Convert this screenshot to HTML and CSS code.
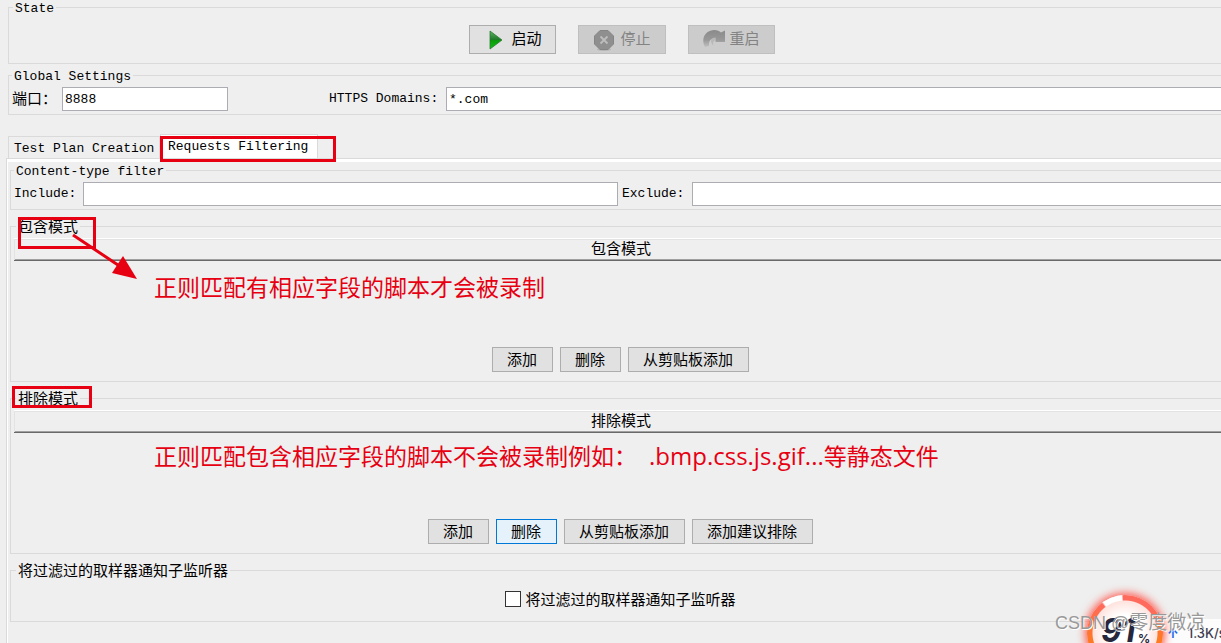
FILE: index.html
```
<!DOCTYPE html>
<html lang="zh-CN">
<head>
<meta charset="utf-8">
<title>HTTP(S) Test Script Recorder</title>
<link rel="stylesheet" href="styles.css">
</head>
<body>
<main class="recorder">
  <fieldset class="group state">
    <legend>State</legend>
    <div class="state-buttons">
      <button type="button" class="btn btn-icon">
        <svg class="icon" viewBox="0 0 22 22" aria-hidden="true">
          <defs><linearGradient id="play" x1="0" y1="0" x2="0" y2="1"><stop offset="0" stop-color="#5fb562"/><stop offset=".48" stop-color="#1f7a2a"/><stop offset=".52" stop-color="#0a9a0a"/><stop offset="1" stop-color="#10c010"/></linearGradient></defs>
          <path d="M6 2 18 11 6 20Z" fill="url(#play)" stroke="#2b7a33" stroke-width=".8"/>
        </svg>
        <span>启动</span>
      </button>
      <button type="button" class="btn btn-icon" disabled>
        <svg class="icon" viewBox="0 0 22 22" aria-hidden="true">
          <ellipse cx="11" cy="20.5" rx="7" ry="1.5" fill="#b4b4b4"/>
          <path d="M7 1.500h8l5.500 5.500v8L15 20.500H7L1.500 15V7Z" fill="#8f8f8f" stroke="#858585"/>
          <path d="m7.500 7.500 7 7m0-7-7 7" stroke="#bdbdbd" stroke-width="1.800"/>
        </svg>
        <span>停止</span>
      </button>
      <button type="button" class="btn btn-icon" disabled>
        <svg class="icon" viewBox="0 0 22 22" aria-hidden="true">
          <defs><linearGradient id="redo" x1="0" y1="0" x2="0" y2="1"><stop offset="0" stop-color="#8a8a8a"/><stop offset=".6" stop-color="#999"/><stop offset="1" stop-color="#c0c0c0"/></linearGradient></defs>
          <path d="M2 18C-1 12 0 7 4 3.500 8 0 15 0 18 3.500L22 1.500V13H12.500V10.500C9 8.500 5.500 11 6 17Z" fill="url(#redo)"/>
          <path d="M12.500 8.500C7.500 8.500 6.500 13 10.500 16.500 9.500 13 10.500 11.500 13 11.500" fill="#b8b8b8"/>
        </svg>
        <span>重启</span>
      </button>
    </div>
  </fieldset>

  <fieldset class="group">
    <legend>Global Settings</legend>
    <div class="global-row">
      <label class="cjk port-label" for="port">端口：</label>
      <input class="field port" id="port" type="text" value="8888">
      <label class="domains-label" for="domains">HTTPS Domains:</label>
      <input class="field domains" id="domains" type="text" value="*.com">
    </div>
  </fieldset>

  <div class="tabs" role="tablist">
    <button type="button" class="tab" role="tab" aria-selected="false">Test Plan Creation</button>
    <button type="button" class="tab tab-active" role="tab" aria-selected="true">Requests Filtering</button>
  </div>

  <section class="pane" role="tabpanel">
    <fieldset class="group">
      <legend>Content-type filter</legend>
      <div class="filter-row">
        <label for="include">Include:</label>
        <input class="field" id="include" type="text">
        <label for="exclude">Exclude:</label>
        <input class="field" id="exclude" type="text">
      </div>
    </fieldset>

    <fieldset class="group patterns">
      <legend class="cjk">包含模式</legend>
      <table class="pattern-table">
        <thead><tr><th scope="col">包含模式</th></tr></thead>
      </table>
      <div class="actions">
        <button type="button" class="btn">添加</button>
        <button type="button" class="btn">删除</button>
        <button type="button" class="btn">从剪贴板添加</button>
      </div>
    </fieldset>

    <fieldset class="group patterns">
      <legend class="cjk">排除模式</legend>
      <table class="pattern-table">
        <thead><tr><th scope="col">排除模式</th></tr></thead>
      </table>
      <div class="actions">
        <button type="button" class="btn">添加</button>
        <button type="button" class="btn btn-hot">删除</button>
        <button type="button" class="btn">从剪贴板添加</button>
        <button type="button" class="btn">添加建议排除</button>
      </div>
    </fieldset>

    <fieldset class="group notify">
      <legend class="cjk">将过滤过的取样器通知子监听器</legend>
      <label class="check-row cjk"><input class="check" type="checkbox">将过滤过的取样器通知子监听器</label>
    </fieldset>
  </section>
</main>

<div class="mark mark-tab"></div>
<div class="mark mark-include"></div>
<div class="mark mark-exclude"></div>
<svg class="arrow" viewBox="0 0 66 48" aria-hidden="true">
  <path d="M1 2 46 32" stroke="#e60012" stroke-width="3"/>
  <path d="M51 23 65 46 40 40Z" fill="#e60012"/>
</svg>
<p class="note note-include">正则匹配有相应字段的脚本才会被录制</p>
<p class="note note-exclude">正则匹配包含相应字段的脚本不会被录制例如：<span class="ext">.bmp.css.js.gif...</span>等静态文件</p>

<div class="monitor">
  <div class="speed"><span class="up">↑</span><span>1.3K/s</span></div>
  <div class="gauge"><span class="gauge-num">91</span><span class="gauge-unit">%</span></div>
  <div class="watermark">CSDN @<span class="author">零度微凉</span></div>
</div>
</body>
</html>
```
FILE: styles.css
```
* { box-sizing: border-box; }

body {
  position: relative;
  margin: 0;
  height: 100vh;
  overflow: hidden;
  background: #efefef;
  color: #000;
  font-family: "Liberation Mono", "Noto Sans CJK SC", monospace;
  font-size: 13px;
  line-height: 16px;
}

button, input { font: inherit; color: inherit; }

/* The panel runs a little past the right edge of the window. */
.recorder {
  display: flex;
  flex-direction: column;
  height: 100%;
  margin-right: -13px;
  padding: 1px 0 0 8px;
}

.cjk, .btn, .pattern-table {
  font-family: "Noto Sans CJK SC", sans-serif;
  font-size: 15px;
}

.group {
  min-width: 0;
  margin: 0;
  padding: 5px 3px 3px;
  border: 1px solid #dadada;
}

.group legend {
  height: 13px;
  padding: 0 2px;
  line-height: 16px;
}

.group legend.cjk { margin-left: 2px; line-height: 12px; }

.state { padding: 11px 0 9px 2px; }
.state legend { margin-left: 2px; }
.state-buttons { display: flex; justify-content: center; gap: 22px; }

.btn {
  height: 25px;
  padding: 0 15px 2px 14px;
  border: 1px solid #adadad;
  background: #e1e1e1;
  line-height: 20px;
  white-space: nowrap;
}

.btn-hot { border-color: #0078d7; background: #e5f1fb; }

.btn-icon {
  display: flex;
  align-items: center;
  gap: 5px;
  height: 29px;
  padding: 0 14px;
}

.btn-icon span { padding-bottom: 4px; }

.btn:disabled { border-color: #bfbfbf; background: #ccc; color: #838383; }
.icon { width: 22px; height: 22px; }

.field {
  height: 24px;
  min-width: 0;
  padding: 0 2px;
  border: 1px solid #abadb3;
  border-radius: 0;
  background: #fff;
}

.global-row { display: flex; align-items: center; }
.state + .group { margin-top: 5px; }
.port-label { width: 50px; padding-bottom: 2px; }
.port { width: 166px; }
.domains-label { width: 117px; margin-left: 101px; }
.domains { flex: 1; }

.tabs { display: flex; align-items: flex-end; margin-top: 19px; }

.tab {
  height: 22px;
  width: 152px;
  padding: 2px 0 0 5px;
  border: 1px solid #dadada;
  border-bottom: 0;
  background: #efefef;
  text-align: left;
  white-space: nowrap;
}

.tab-active {
  height: 24px;
  width: 158px;
  padding: 0 0 0 7px;
  background: #fff;
}

.pane {
  display: flex;
  flex: 1;
  flex-direction: column;
  gap: 10px;
  margin-left: -2px;
  padding: 5px 3px 0 3px;
  border-top: 1px solid #dadada;
  border-left: 1px solid #dadada;
  box-shadow: inset 1px 3px #fff;
}

.filter-row {
  display: grid;
  grid-template-columns: auto 1fr auto 1fr;
  align-items: center;
}

.filter-row label { width: 69px; }
.filter-row label + input + label { width: 74px; padding-left: 4px; }

.patterns { padding-bottom: 9px; }

.pattern-table {
  width: 100%;
  height: 23px;
  margin-bottom: 86px;
  border-collapse: separate;
  border-spacing: 0;
}

.pattern-table th {
  height: 23px;
  padding: 0 0 3px 1px;
  border-top: 1px solid #fff;
  border-bottom: 1px solid #696969;
  box-shadow: inset 1px 1px #e3e3e3, inset 0 -1px #a0a0a0;
  font-weight: normal;
  line-height: 16px;
}

.actions { display: flex; justify-content: center; gap: 7px; }

.notify { padding: 11px 3px 11px; }
.check-row {
  display: flex;
  align-items: center;
  gap: 4px;
  width: fit-content;
  height: 22px;
  margin: 0 auto;
}

.check {
  appearance: none;
  width: 16px;
  height: 16px;
  margin: 0;
  border: 1px solid #333;
  background: #fff;
}

/* Annotations laid over the form */
.mark { position: absolute; border: 3px solid #e60012; }
.mark-tab { left: 160px; top: 136px; width: 176px; height: 26px; }
.mark-include { left: 18px; top: 217px; width: 78px; height: 32px; }
.mark-exclude { left: 12px; top: 386px; width: 80px; height: 22px; }
.arrow { position: absolute; left: 72px; top: 233px; width: 66px; height: 48px; }

.note {
  position: absolute;
  left: 154px;
  margin: 0;
  color: #e60012;
  font-family: "Noto Sans CJK SC", sans-serif;
  font-size: 23px;
  line-height: 30px;
  white-space: nowrap;
}

.note-include { top: 271px; }
.note-exclude { top: 440px; }
.ext { margin-left: 12px; font-family: "Open Sans", sans-serif; font-size: 24px; }

/* Floating memory and network monitor */
.monitor {
  position: absolute;
  right: 0;
  bottom: 0;
  width: 190px;
  height: 70px;
  overflow: hidden;
  font-family: Inter, sans-serif;
}

.speed {
  position: absolute;
  right: 0;
  bottom: 0;
  display: flex;
  gap: 9px;
  width: 80px;
  height: 24px;
  padding: 6px 0 0 26px;
  background: #fcfcfd;
  color: #3c3c50;
  font-size: 13px;
  font-weight: 500;
  white-space: nowrap;
}

.up { color: #1668f0; font-weight: bold; }

.gauge {
  position: absolute;
  left: 56px;
  top: 22px;
  width: 76px;
  height: 76px;
  border-radius: 50%;
  background:
    radial-gradient(circle, #fff 0 18px, #ffe3de 32px, transparent 33px),
    conic-gradient(#ff6a5c 0 50deg, #ff7a20 100deg 250deg, #ff6a5c 322deg, #fff 325deg 355deg, #ff6a5c 357deg);
  box-shadow: 0 0 8px 2px #ff5a50;
  color: #26263c;
  font-weight: bold;
}

.gauge-num { position: absolute; left: 14px; top: 16px; font-size: 32px; font-style: italic; line-height: 40px; }
.gauge-unit { position: absolute; left: 51px; top: 36px; font-size: 12px; }

.watermark {
  position: absolute;
  left: 24px;
  top: 36px;
  color: #999;
  font-family: "Liberation Sans", "Noto Sans CJK SC", sans-serif;
  font-size: 18px;
  line-height: 28px;
  text-shadow: 1px 1px #fff;
  white-space: nowrap;
}

.author { font-size: 19px; }
```
